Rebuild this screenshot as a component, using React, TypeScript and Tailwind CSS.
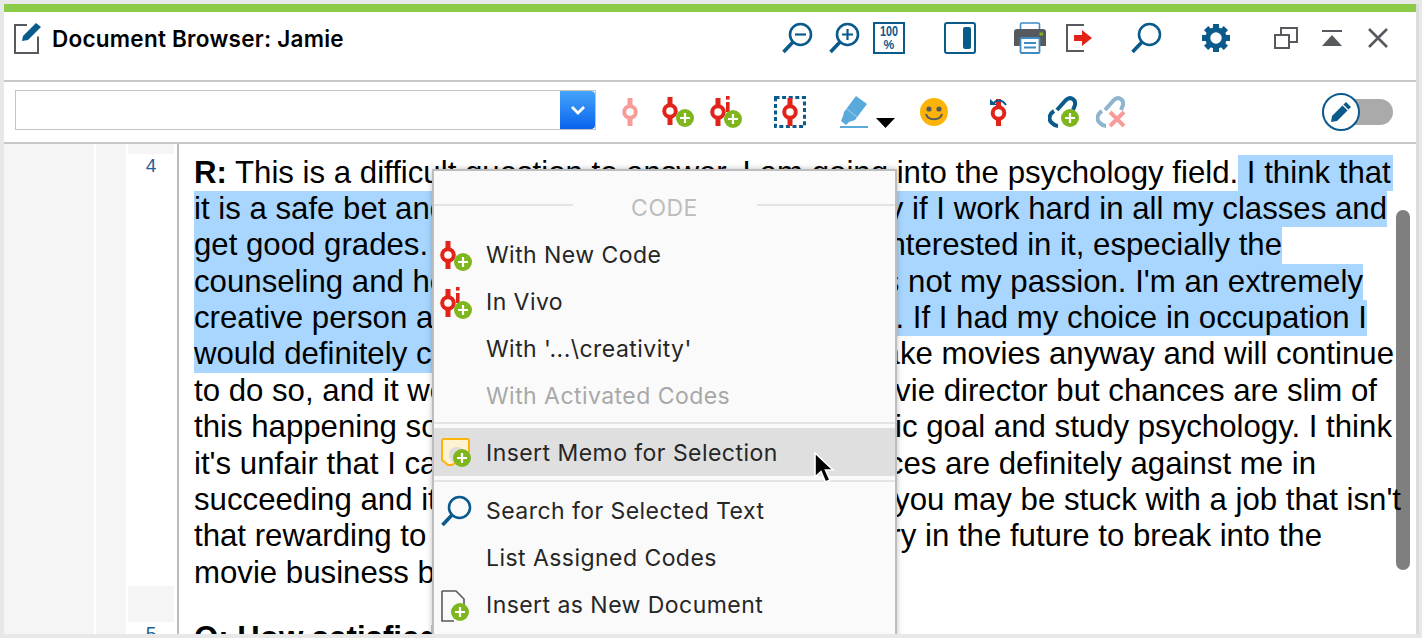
const blue = "#0b5a8c"
const red = "#e2231a"

function Plus({ cx, cy }: { cx: number; cy: number }) {
  return (
    <g>
      <circle cx={cx} cy={cy} r="9" fill="#7fb61e" />
      <path d={`M${cx - 5} ${cy}H${cx + 5}M${cx} ${cy - 5}V${cy + 5}`} stroke="#fff" strokeWidth="2.2" />
    </g>
  )
}

function Ring({ x = 8, y = 14, color = red, h = 28 }: { x?: number; y?: number; color?: string; h?: number }) {
  return (
    <g>
      <rect x={x - 2.5} y={y - 14} width="5" height={h} fill={color} />
      <circle cx={x} cy={y} r="5.8" fill="#fff" stroke={color} strokeWidth="4" />
    </g>
  )
}

function CodeAdd() {
  return (
    <svg width="32" height="30" viewBox="0 0 32 30">
      <Ring x={8} y={14} />
      <Plus cx={23} cy={21} />
    </svg>
  )
}

function InVivo() {
  return (
    <svg width="32" height="32" viewBox="0 0 32 32">
      <Ring x={8} y={16} />
      <rect x="16" y="0" width="3.6" height="3.6" fill={red} />
      <rect x="16" y="6" width="3.6" height="10" fill={red} />
      <Plus cx={23} cy={23} />
    </svg>
  )
}

function Lens({ size = 32, minus = false, plus = false }: { size?: number; minus?: boolean; plus?: boolean }) {
  return (
    <svg width={size} height={size} viewBox="0 0 32 32" fill="none" stroke={blue}>
      <circle cx="19.5" cy="12.5" r="10.5" strokeWidth="2.6" />
      <path d="M12 20L2.5 30" strokeWidth="3.6" />
      {minus && <path d="M14 12.5H25" strokeWidth="2.2" />}
      {plus && <path d="M14 12.5H25M19.5 7V18" strokeWidth="2.2" />}
    </svg>
  )
}

function Printer() {
  return (
    <svg width="32" height="32" viewBox="0 0 32 32">
      <rect x="6.5" y="1" width="19" height="10" rx="1.5" fill="none" stroke="#3f8cc4" strokeWidth="1.6" />
      <path d="M3 7H29a3 3 0 0 1 3 3V24H26V17H6V24H0V10a3 3 0 0 1 3-3Z" fill="#565a5e" />
      <rect x="25.5" y="10.5" width="3.5" height="3" fill="#7fb61e" />
      <rect x="6.5" y="16" width="19" height="15" rx="1" fill="#fff" stroke="#3f8cc4" strokeWidth="1.8" />
      <path d="M10 21H22M10 25.5H22" stroke="#3f8cc4" strokeWidth="1.8" />
    </svg>
  )
}

function Export() {
  return (
    <svg width="26" height="28" viewBox="0 0 26 28" fill="none">
      <path d="M18 1H1V27H18" stroke="#565a5e" strokeWidth="2" />
      <path d="M8 11H16V6L26 14L16 22V17H8Z" fill={red} />
    </svg>
  )
}

function Gear() {
  const teeth = [0, 45, 90, 135, 180, 225, 270, 315]
  return (
    <svg width="28" height="28" viewBox="0 0 28 28">
      {teeth.map((a) => (
        <rect key={a} x="11" y="0" width="6" height="6" fill={blue} transform={`rotate(${a} 14 14)`} />
      ))}
      <circle cx="14" cy="14" r="8.2" fill="none" stroke={blue} strokeWidth="5" />
    </svg>
  )
}

function Highlighter() {
  return (
    <svg width="28" height="32" viewBox="0 0 28 32">
      <path d="M16 0L27 8L15 24L9 26L6 29L1 25L3 20L4 16Z" fill="#5aa9dc" />
      <path d="M7 13L17 21" stroke="#a9d2ec" strokeWidth="1" />
      <rect x="0" y="30" width="28" height="2" fill="#5aa9dc" />
    </svg>
  )
}

function Smiley() {
  return (
    <svg width="28" height="28" viewBox="0 0 28 28">
      <circle cx="14" cy="14" r="14" fill="#fdb408" />
      <circle cx="9" cy="11" r="2.6" fill="#565a5e" />
      <circle cx="19" cy="11" r="2.6" fill="#565a5e" />
      <path d="M6 16C8 23 20 23 22 16" fill="none" stroke="#565a5e" strokeWidth="2" />
    </svg>
  )
}

function Link({ faded = false }: { faded?: boolean }) {
  const c = faded ? "#8fb4cf" : blue
  return (
    <svg width="32" height="32" viewBox="0 0 32 32" fill="none">
      <path d="M9 14L18 4C22 0 28 3 27 9L25 14" stroke={c} strokeWidth="4" />
      <path d="M6 15C1 18 0 24 4 27C6 29 8 30 10 30" stroke={c} strokeWidth="4" />
      {faded ? (
        <path d="M14 16L28 30M28 16L14 30" stroke="#f79c99" strokeWidth="4" />
      ) : (
        <Plus cx={22} cy={22} />
      )}
    </svg>
  )
}

function Memo() {
  return (
    <svg width="32" height="30" viewBox="0 0 32 30">
      <path d="M2 3a2 2 0 0 1 2-2H27a2 2 0 0 1 2 2V14L12 27H8L2 22Z" fill="#fdf3d2" stroke="#fdb408" strokeWidth="2" />
      <circle cx="17" cy="17" r="8" fill="#dcdcdc" />
      <Plus cx={22} cy={20} />
    </svg>
  )
}

function NewDoc() {
  return (
    <svg width="30" height="32" viewBox="0 0 30 32">
      <path d="M2 1H16L24 9V18M14 31H2V1" fill="none" stroke="#565a5e" strokeWidth="1.6" />
      <Plus cx={20} cy={22} />
    </svg>
  )
}

function Toolbar() {
  return (
    <div className="flex h-[62px] items-center border-b-2 border-[#c8c8c8] pl-[11px]">
      <div className="mb-1 flex h-10 w-[581px] border border-[#c4c4c4]">
        <div className="flex-1" />
        <div className="flex w-[35px] items-center justify-center rounded-r bg-gradient-to-b from-[#45a3fa] to-[#0a63ee]">
          <svg width="16" height="11" viewBox="0 0 16 11" fill="none">
            <path d="M2 2L8 8L14 2" stroke="#fff" strokeWidth="2.8" />
          </svg>
        </div>
      </div>
      <svg className="ml-[26px]" width="16" height="28" viewBox="0 0 16 28">
        <Ring color="#f79c99" />
      </svg>
      <div className="ml-6"><CodeAdd /></div>
      <div className="ml-4"><InVivo /></div>
      <svg className="ml-8" width="32" height="32" viewBox="0 0 32 32">
        <rect x="1.5" y="1.5" width="29" height="29" fill="none" stroke={blue} strokeWidth="3" strokeDasharray="4 2.6" />
        <Ring x={16} y={16} h={28} />
      </svg>
      <div className="ml-[34px]"><Highlighter /></div>
      <svg className="ml-2 mt-[22px]" width="19" height="10" viewBox="0 0 19 10">
        <path d="M0 0H19L9.5 10Z" fill="#000" />
      </svg>
      <div className="ml-[25px]"><Smiley /></div>
      <svg className="ml-[42px]" width="17" height="28" viewBox="0 0 17 28">
        <Ring x={8.5} y={15} h={27} />
        <path d="M3 7C5 1 12 1 16 7" fill="none" stroke={blue} strokeWidth="2" />
        <path d="M0 1V7H7Z" fill={blue} />
      </svg>
      <div className="ml-[41px]"><Link /></div>
      <div className="ml-4"><Link faded /></div>
      <div className="relative ml-[194px] h-[26px] w-[71px] rounded-full bg-[#aaaaaa]">
        <div className="absolute left-0 top-[-6px] flex h-[38px] w-[38px] items-center justify-center rounded-full border-2 border-[#0b5a8c] bg-white">
          <svg width="24" height="24" viewBox="0 0 24 24">
            <path d="M17 2L22 7L8 21L2 22L3 16Z" fill={blue} />
            <path d="M14 5L19 10" stroke="#fff" strokeWidth="1.2" />
          </svg>
        </div>
      </div>
    </div>
  )
}

function Header() {
  return (
    <div className="flex h-[70px] items-start border-b-2 border-[#c8c8c8] pb-[16px] pl-[10px] pt-[10px]">
      <div className="flex h-8 items-center">
        <svg width="28" height="32" viewBox="0 0 28 32" fill="none">
          <path d="M13 3H1V32H24V15" stroke="#565a5e" strokeWidth="2" transform="scale(1 .97)" />
          <path d="M22 1L27 5L14 18L8 19L9 14Z" fill={blue} />
        </svg>
        <span className="ml-[10px] whitespace-nowrap pt-[2px] font-['Inter',sans-serif] text-[22.5px] font-semibold tracking-[0.25px] text-black">
          Document Browser: Jamie
        </span>
      </div>
      <div className="ml-[437px] flex h-8 items-center">
        <Lens minus />
        <div className="ml-[15px]"><Lens plus /></div>
        <div className="ml-[13px] flex h-8 w-8 flex-col items-center justify-center border-2 border-[#0b5a8c] font-['Liberation_Sans',sans-serif] text-[12px] font-bold leading-[14px] text-[#0b5a8c]">
          <span className="scale-x-[0.9] scale-y-[1.2]">100</span>
          <span>%</span>
        </div>
        <div className="ml-[39px] flex h-8 w-8 justify-end rounded-[3px] border-2 border-[#0b5a8c] p-[3px]">
          <div className="w-[8px] rounded-[2px] bg-[#0b5a8c]" />
        </div>
        <div className="ml-[38px]"><Printer /></div>
        <div className="ml-5"><Export /></div>
        <div className="ml-[38px]"><Lens /></div>
        <div className="ml-10"><Gear /></div>
        <svg className="ml-11" width="24" height="22" viewBox="0 0 24 22" fill="none" stroke="#565a5e" strokeWidth="2">
          <rect x="7" y="1" width="16" height="14" />
          <rect x="1" y="8" width="14" height="13" fill="#fff" />
        </svg>
        <svg className="ml-[23px]" width="22" height="16" viewBox="0 0 22 16">
          <rect x="1" y="0" width="20" height="2" fill="#565a5e" />
          <path d="M11 5L21 16H1Z" fill="#565a5e" />
        </svg>
        <svg className="ml-[25px]" width="20" height="20" viewBox="0 0 20 20">
          <path d="M1 1L19 19M19 1L1 19" stroke="#565a5e" strokeWidth="2.6" />
        </svg>
      </div>
    </div>
  )
}

function Line({ left, right, width, selected, leftSelected }: {
  left: string
  right: string
  width: string
  selected?: boolean
  leftSelected?: boolean
}) {
  return (
    <div className={`flex h-[36.4px] justify-between leading-[36.4px] ${width} ${selected ? "bg-[#a8d6ff]" : ""}`}>
      <span className={leftSelected ? "w-[260px] bg-[#a8d6ff]" : ""}>{left}</span>
      <span>{right}</span>
    </div>
  )
}

function Document() {
  return (
    <div className="flex min-w-0 flex-1 flex-col overflow-hidden whitespace-pre pl-[15px] pt-[10.5px] font-['Liberation_Sans',sans-serif] text-[31.2px] text-black">
      <div className="flex h-[36.4px] leading-[36.4px]">
        <span><b>R:</b> This is a difficult question to answer. I am going into the psychology field.</span>
        <span className="bg-[#a8d6ff] pr-[2px]"> I think that</span>
      </div>
      <Line selected width="w-[1193px]" left="it is a safe bet and" right="y if I work hard in all my classes and" />
      <Line selected width="w-[1088px]" left="get good grades." right="nterested in it, especially the" />
      <Line selected width="w-[1169px]" left="counseling and he" right="s not my passion. I'm an extremely" />
      <Line selected width="w-[1173px]" left="creative person a" right=". If I had my choice in occupation I" />
      <Line leftSelected width="w-[1200px]" left="would definitely c" right="ake movies anyway and will continue" />
      <Line width="w-[1183px]" left="to do so, and it wo" right="vie director but chances are slim of" />
      <Line width="w-[1198px]" left="this happening so" right="ic goal and study psychology. I think" />
      <Line width="w-[1122px]" left="it's unfair that I ca" right="ces are definitely against me in" />
      <Line width="w-[1207px]" left="succeeding and it" right="you may be stuck with a job that isn't" />
      <Line width="w-[1128px]" left="that rewarding to" right="ry in the future to break into the" />
      <Line width="w-[260px]" left="movie business b" right="" />
      <div className="mt-[29px] font-bold leading-[36.4px]">Q: How satisfied</div>
    </div>
  )
}

function MenuItem({ icon, label, disabled, hover, tall }: {
  icon?: React.ReactNode
  label: string
  disabled?: boolean
  hover?: boolean
  tall?: boolean
}) {
  return (
    <div className={`flex items-center pl-[6px] pt-[2px] ${tall ? "h-[48px]" : "h-[47px]"} ${hover ? "bg-[#dfdfdf]" : ""}`}>
      <div className="flex w-[46px] shrink-0 items-center">{icon}</div>
      <span className={`font-['Inter',sans-serif] text-[23px] tracking-[0.45px] ${disabled ? "text-[#a8a8a8]" : "text-[#262626]"}`}>
        {label}
      </span>
    </div>
  )
}

function ContextMenu() {
  return (
    <div className="absolute left-[428px] top-[25px] w-[465px] border-2 border-[#bdbdbd] bg-[#fafafa] pb-5 shadow-[0_0_6px_rgba(0,0,0,0.25)]">
      <div className="flex h-[60px] items-center pt-[14px]">
        <div className="mb-[7px] h-[2px] flex-1 bg-[#e4e4e4]" />
        <span className="w-[184px] text-center font-['Inter',sans-serif] text-[23px] tracking-[0.5px] text-[#bdbdbd]">CODE</span>
        <div className="mb-[7px] h-[2px] flex-1 bg-[#e4e4e4]" />
      </div>
      <MenuItem icon={<CodeAdd />} label="With New Code" />
      <MenuItem icon={<InVivo />} label="In Vivo" />
      <MenuItem label="With '...\creativity'" />
      <MenuItem label="With Activated Codes" disabled />
      <div className="mb-1 mt-[3px] h-[2px] bg-[#e4e4e4]" />
      <MenuItem icon={<Memo />} label="Insert Memo for Selection" hover tall />
      <div className="mb-1 mt-1 h-[2px] bg-[#e4e4e4]" />
      <MenuItem icon={<Lens />} label="Search for Selected Text" tall />
      <MenuItem label="List Assigned Codes" />
      <MenuItem icon={<NewDoc />} label="Insert as New Document" />
    </div>
  )
}

function Cursor() {
  return (
    <svg className="absolute left-[809px] top-[307px]" width="24" height="36" viewBox="0 0 24 36">
      <path d="M2 2V26L8 20.5L12.5 31L17 29L12.5 19H20Z" fill="#000" stroke="#fff" strokeWidth="1.6" />
    </svg>
  )
}

export default function App() {
  return (
    <div className="h-[638px] w-[1422px] overflow-hidden bg-[#e8e8e8] pb-1 pl-1 pt-1">
      <div className="flex h-[630px] w-[1415px] flex-col border-r-[3px] border-[#dcdcdc] bg-white">
        <div className="h-2 shrink-0 bg-[#8ccb47]" />
        <Header />
        <Toolbar />
        <div className="relative flex min-h-0 flex-1 overflow-hidden">
          <div className="w-[90px] shrink-0 bg-[#f5f5f5]" />
          <div className="ml-[2px] w-[30px] shrink-0 bg-[#f5f5f5]" />
          <div className="ml-[2px] flex w-[46px] shrink-0 flex-col items-center font-['Liberation_Sans',sans-serif] text-[19px] text-[#1f6297]">
            <div className="h-[10px] w-full shrink-0 bg-[#f5f5f5]" />
            <span className="mt-[2px] h-[430px] shrink-0 leading-5">4</span>
            <div className="h-9 w-full shrink-0 bg-[#f5f5f5]" />
            <span className="mt-[2px] shrink-0 leading-5">5</span>
          </div>
          <div className="ml-[3px] w-[2px] shrink-0 bg-[#bdbdbd]" />
          <Document />
          <div className="absolute left-[1392px] top-[66px] h-[360px] w-[14px] rounded-full bg-black/50" />
          <ContextMenu />
          <Cursor />
        </div>
      </div>
    </div>
  )
}
